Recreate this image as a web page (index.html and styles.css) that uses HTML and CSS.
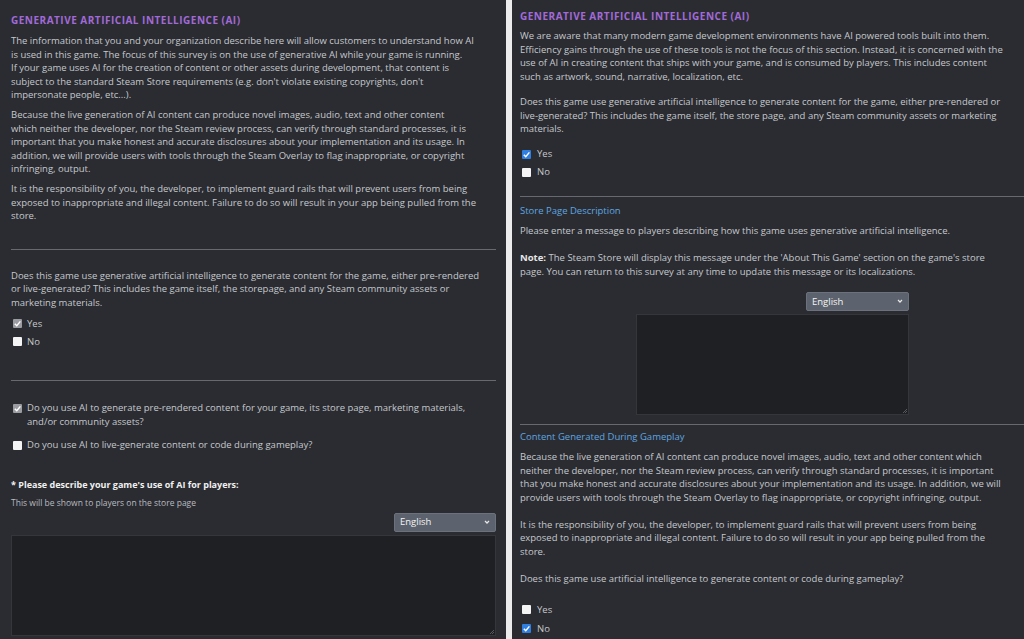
FILE: index.html
```html
<!DOCTYPE html>
<html lang="en">
<head>
<meta charset="utf-8">
<title>Generative AI survey</title>
<link rel="stylesheet" href="styles.css">
</head>
<body>
<div class="shot">
  <section class="panel panel-left">
    <h2 class="title">Generative Artificial Intelligence (AI)</h2>
    <p>The information that you and your organization describe here will allow customers to understand how AI<br>is used in this game. The focus of this survey is on the use of generative AI while your game is running.<br>If your game uses AI for the creation of content or other assets during development, that content is<br>subject to the standard Steam Store requirements (e.g. don't violate existing copyrights, don't<br>impersonate people, etc...).</p>
    <p>Because the live generation of AI content can produce novel images, audio, text and other content<br>which neither the developer, nor the Steam review process, can verify through standard processes, it is<br>important that you make honest and accurate disclosures about your implementation and its usage. In<br>addition, we will provide users with tools through the Steam Overlay to flag inappropriate, or copyright<br>infringing, output.</p>
    <p>It is the responsibility of you, the developer, to implement guard rails that will prevent users from being exposed to inappropriate and illegal content. Failure to do so will result in your app being pulled from the store.</p>
    <hr class="rule rule-left-1">
    <p>Does this game use generative artificial intelligence to generate content for the game, either pre-rendered or live-generated? This includes the game itself, the storepage, and any Steam community assets or marketing materials.</p>
    <ul class="checks checks-left">
      <li><span class="box box-grey"><svg viewBox="0 0 10 10"><path d="M2 5.2 L4.2 7.4 L8.2 2.6" fill="none" stroke="#fff" stroke-width="1.6"/></svg></span>Yes</li>
      <li><span class="box"></span>No</li>
    </ul>
    <hr class="rule rule-left-2">
    <ul class="checks checks-long">
      <li><span class="box box-grey"><svg viewBox="0 0 10 10"><path d="M2 5.2 L4.2 7.4 L8.2 2.6" fill="none" stroke="#fff" stroke-width="1.6"/></svg></span><span>Do you use AI to generate pre-rendered content for your game, its store page, marketing materials, and/or community assets?</span></li>
      <li><span class="box"></span><span>Do you use AI to live-generate content or code during gameplay?</span></li>
    </ul>
    <p class="label">* Please describe your game's use of AI for players:</p>
    <p class="hint">This will be shown to players on the store page</p>
    <div class="lang-row">
      <div class="select">English<svg viewBox="0 0 10 10"><path d="M2.5 3.8 L5 6.3 L7.5 3.8" fill="none" stroke="#e8e8e8" stroke-width="1.5"/></svg></div>
    </div>
    <div class="textarea textarea-wide"></div>
  </section>

  <section class="panel panel-right">
    <h2 class="title">Generative Artificial Intelligence (AI)</h2>
    <p>We are aware that many modern game development environments have AI powered tools built into them. Efficiency gains through the use of these tools is not the focus of this section. Instead, it is concerned with the use of AI in creating content that ships with your game, and is consumed by players. This includes content such as artwork, sound, narrative, localization, etc.</p>
    <p class="gap-12">Does this game use generative artificial intelligence to generate content for the game, either pre-rendered or live-generated? This includes the game itself, the store page, and any Steam community assets or marketing materials.</p>
    <ul class="checks checks-right">
      <li><span class="box box-blue"><svg viewBox="0 0 10 10"><path d="M2 5.2 L4.2 7.4 L8.2 2.6" fill="none" stroke="#fff" stroke-width="1.6"/></svg></span>Yes</li>
      <li><span class="box"></span>No</li>
    </ul>
    <hr class="rule rule-right-1">
    <h3 class="subhead">Store Page Description</h3>
    <p>Please enter a message to players describing how this game uses generative artificial intelligence.</p>
    <p class="gap-13"><b>Note:</b> The Steam Store will display this message under the 'About This Game' section on the game's store page. You can return to this survey at any time to update this message or its localizations.</p>
    <div class="editor">
      <div class="select select-right">English<svg viewBox="0 0 10 10"><path d="M2.5 3.8 L5 6.3 L7.5 3.8" fill="none" stroke="#e8e8e8" stroke-width="1.5"/></svg></div>
      <div class="textarea textarea-narrow"></div>
    </div>
    <hr class="rule rule-right-2">
    <h3 class="subhead">Content Generated During Gameplay</h3>
    <p>Because the live generation of AI content can produce novel images, audio, text and other content which neither the developer, nor the Steam review process, can verify through standard processes, it is important that you make honest and accurate disclosures about your implementation and its usage. In addition, we will provide users with tools through the Steam Overlay to flag inappropriate, or copyright infringing, output.</p>
    <p class="gap-13">It is the responsibility of you, the developer, to implement guard rails that will prevent users from being exposed to inappropriate and illegal content. Failure to do so will result in your app being pulled from the store.</p>
    <p class="gap-13">Does this game use artificial intelligence to generate content or code during gameplay?</p>
    <ul class="checks checks-right checks-last">
      <li><span class="box"></span>Yes</li>
      <li><span class="box box-blue"><svg viewBox="0 0 10 10"><path d="M2 5.2 L4.2 7.4 L8.2 2.6" fill="none" stroke="#fff" stroke-width="1.6"/></svg></span>No</li>
    </ul>
  </section>
</div>
</body>
</html>
```

FILE: styles.css
```css
html, body {
  margin: 0;
  padding: 0;
  background: #ececec;
  overflow: hidden;
}
.shot {
  display: flex;
  gap: 6px;
  width: 1024px;
  height: 639px;
  font-family: "Open Sans", "Liberation Sans", sans-serif;
  font-size: 9.5px;
  line-height: 13.5px;
  color: #c6c8cd;
}
.panel {
  background: #2a2c31;
  height: 639px;
  overflow: hidden;
  box-sizing: border-box;
}
.panel-left {
  width: 506px;
  padding: 13px 10px 0 11px;
}
.panel-right {
  flex: 1;
  padding: 9px 0 0 8px;
}
.title {
  margin: 0 0 7px;
  font-size: 10px;
  line-height: 14px;
  font-weight: 700;
  text-transform: uppercase;
  letter-spacing: 0.5px;
  color: #a26ad8;
}
.panel-right .title {
  margin-bottom: 6.25px;
}
p {
  margin: 0 0 6.5px;
  padding-right: 8px;
}
.panel-right p {
  margin: 0;
  padding-right: 14px;
}
.panel-right p.gap-12 {
  margin-top: 12px;
}
.panel-right p.gap-13 {
  margin-top: 13.5px;
}
.rule {
  border: 0;
  height: 1px;
  background: #66696f;
}
.rule-left-1 { margin: 26.5px 0 18.5px; }
.rule-left-2 { margin: 32px 0 20px; }
.rule-right-1 { margin: 17px 0 7.25px; }
.rule-right-2 { margin: 9px 0 5.25px; }
.checks {
  list-style: none;
  margin: 0;
  padding: 0;
}
.checks li {
  display: flex;
  align-items: flex-start;
  gap: 5px;
  margin-bottom: 4.5px;
}
.checks-left {
  margin-top: 7.5px;
  padding-left: 2px;
}
.checks-long {
  padding-left: 2px;
}
.checks-long li {
  margin-bottom: 10px;
}
.checks-long li:last-child {
  margin-bottom: 0;
}
.checks-right {
  margin-top: 11.5px;
  padding-left: 2px;
}
.checks-right li {
  gap: 6px;
}
.checks-last {
  margin-top: 17.5px;
}
.checks-last li {
  margin-bottom: 5.5px;
}
.box {
  flex: none;
  width: 9px;
  height: 9px;
  margin-top: 2.5px;
  background: #f4f4f4;
  border-radius: 1px;
  display: inline-flex;
}
.box svg {
  width: 9px;
  height: 9px;
}
.box-grey {
  background: #9a9ca1;
}
.box-blue {
  background: #2f7fe0;
}
.label {
  margin: 26.5px 0 0;
  font-size: 9px;
  font-weight: 700;
  color: #f0f0f0;
}
.hint {
  margin: 5px 0 0;
  font-size: 8.5px;
  line-height: 12px;
  color: #b9bbc0;
}
.lang-row {
  display: flex;
  justify-content: flex-end;
  margin-top: 4px;
}
.select {
  box-sizing: border-box;
  width: 102px;
  height: 19px;
  padding: 0 4px 0 5px;
  display: flex;
  align-items: center;
  justify-content: space-between;
  background: #5d636e;
  border: 1px solid #6c727c;
  border-radius: 2px;
  color: #f4f4f4;
  font-size: 9.5px;
}
.select svg {
  width: 8px;
  height: 8px;
}
.textarea {
  box-sizing: border-box;
  background-color: #1f2024;
  background-image: linear-gradient(135deg, transparent 0 60%, #55585e 60% 68%, transparent 68% 80%, #55585e 80% 88%, transparent 88%);
  background-size: 6px 6px;
  background-position: right 1px bottom 1px;
  background-repeat: no-repeat;
  border: 1px solid #34363c;
  margin-top: 3px;
}
.textarea-wide {
  width: 485px;
  height: 101px;
}
.editor {
  display: flex;
  flex-direction: column;
  align-items: flex-end;
  width: 389px;
  margin-top: 13.75px;
}
.select-right {
  width: 103px;
}
.textarea-narrow {
  width: 273px;
  height: 101px;
}
.subhead {
  margin: 0 0 6.5px;
  font-size: 9.5px;
  line-height: 13.5px;
  font-weight: 400;
  color: #5fa6e0;
}
b {
  color: #e6e6e6;
}
```
